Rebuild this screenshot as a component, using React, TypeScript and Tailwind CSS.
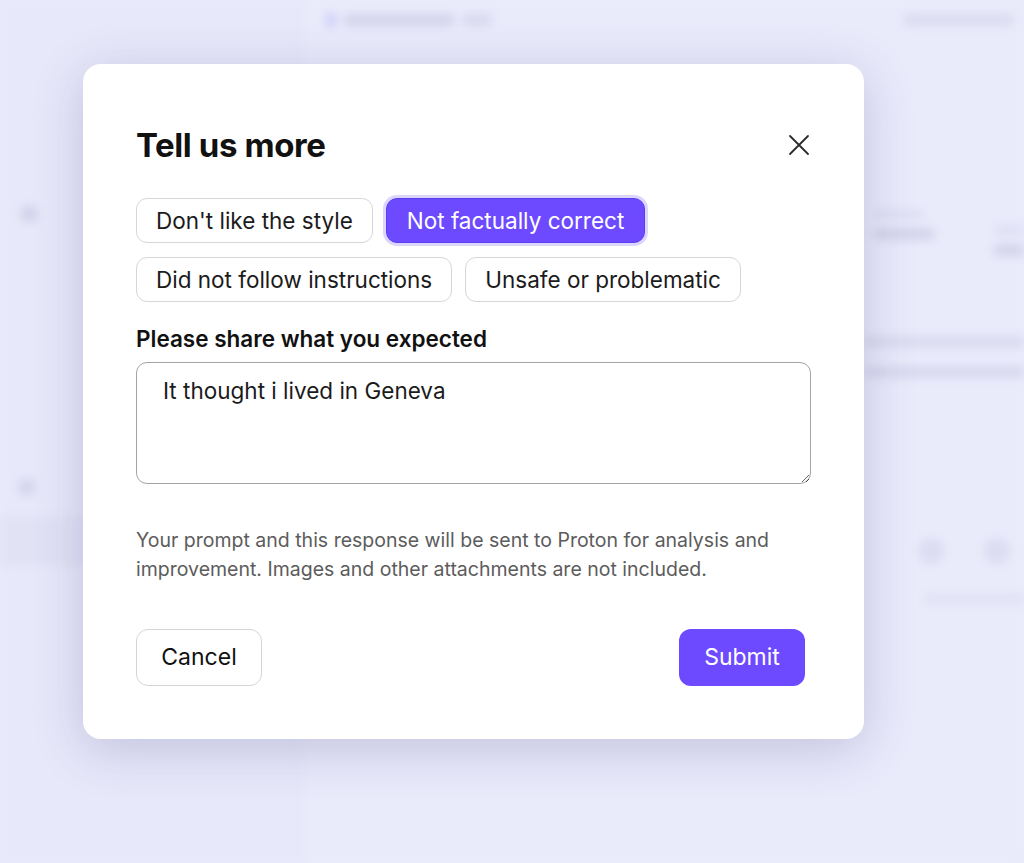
import { useState } from "react";

const reasons = [
  "Don't like the style",
  "Not factually correct",
  "Did not follow instructions",
  "Unsafe or problematic",
];

function Backdrop() {
  return (
    <div className="flex h-full w-full blur-[5px]">
      {/* sidebar */}
      <aside className="flex h-full w-[300px] shrink-0 flex-col border-r border-[#d9daf0] bg-[#e7e8f9]">
        <div className="h-[60px]" />
        <div className="mt-[145px] ml-[20px] h-[18px] w-[18px] rounded-full bg-[#d2d3ea]" />
        <div className="mt-[255px] ml-[18px] h-[18px] w-[18px] rounded-full bg-[#d4d5ec]" />
        <div className="mt-[20px] h-[50px] w-full bg-[#e1e2f4]" />
      </aside>
      {/* main */}
      <main className="flex flex-1 flex-col bg-[#e9eafa]">
        <header className="flex h-[40px] items-center justify-between pl-[26px] pr-[10px]">
          <div className="flex items-center gap-[8px]">
            <div className="h-[14px] w-[10px] rounded-sm bg-[#cfcdfc]" />
            <div className="h-[12px] w-[110px] rounded bg-[#d3d4ea]" />
            <div className="h-[12px] w-[30px] rounded bg-[#d9daee]" />
          </div>
          <div className="h-[12px] w-[110px] rounded bg-[#dcdcf0]" />
        </header>
        <div className="mt-[170px] flex justify-end gap-[60px]">
          <div className="flex flex-col gap-[10px]">
            <div className="h-[8px] w-[50px] rounded bg-[#dcddf1]" />
            <div className="h-[12px] w-[60px] rounded bg-[#d3d4ea]" />
          </div>
          <div className="flex flex-col gap-[10px] pt-[16px]">
            <div className="h-[8px] w-[30px] rounded bg-[#dcddf1]" />
            <div className="h-[12px] w-[30px] rounded bg-[#d3d4ea]" />
          </div>
        </div>
        <div className="mt-[80px] flex flex-col items-end gap-[18px]">
          <div className="h-[12px] w-[160px] rounded bg-[#dadbef]" />
          <div className="h-[12px] w-[160px] rounded bg-[#d8d9ee]" />
        </div>
        <div className="mt-[160px] flex justify-end gap-[40px] pr-[14px]">
          <div className="h-[26px] w-[26px] rounded-full bg-[#dcddf1]" />
          <div className="h-[26px] w-[26px] rounded-full bg-[#dcddf1]" />
        </div>
        <div className="mt-[30px] ml-auto h-[10px] w-[100px] rounded bg-[#e0e1f3]" />
      </main>
    </div>
  );
}

function CloseIcon() {
  return (
    <svg width="22" height="22" viewBox="0 0 22 22" fill="none">
      <path
        d="M2 2L20 20M20 2L2 20"
        stroke="#2b2b2b"
        strokeWidth="1.8"
        strokeLinecap="round"
      />
    </svg>
  );
}

export default function App() {
  const [selected, setSelected] = useState("Not factually correct");
  const [text, setText] = useState("It thought i lived in Geneva");

  return (
    <div className="relative h-[863px] w-full overflow-hidden bg-[#e9eafa] font-['Inter',sans-serif]">
      <Backdrop />

      {/* feedback modal */}
      <div className="absolute left-[83px] top-[64px] w-[781px] rounded-[18px] bg-white px-[53px] pb-[53px] pt-[63px] shadow-[0_10px_50px_rgba(70,70,140,0.24)]">
        <div className="flex items-center justify-between">
          <h2 className="text-[33px] font-bold leading-[36px] tracking-[-0.4px] text-[#111]">
            Tell us more
          </h2>
          <button className="flex h-[24px] w-[24px] items-center justify-center">
            <CloseIcon />
          </button>
        </div>

        <div className="mt-[35px] flex w-[620px] flex-wrap gap-x-[13px] gap-y-[14px]">
          {reasons.map((r) => {
            const active = r === selected;
            return (
              <button
                key={r}
                onClick={() => setSelected(r)}
                className={
                  active
                    ? "h-[45px] rounded-[11px] border border-[#5a3ff0] bg-[#6d4aff] px-[20px] text-[22.5px] text-white ring-[3px] ring-[#dcd6ff]"
                    : "h-[45px] rounded-[11px] border border-[#d7d7d7] bg-white px-[19px] text-[22.5px] text-[#1b1b1b]"
                }
              >
                {r}
              </button>
            );
          })}
        </div>

        <label className="mt-[23px] block text-[22.5px] font-semibold leading-[28px] text-[#111]">
          Please share what you expected
        </label>
        <textarea
          value={text}
          onChange={(e) => setText(e.target.value)}
          className="mt-[9px] block h-[122px] w-full rounded-[11px] border border-[#a3a3a3] px-[26px] pt-[14px] text-[22.5px] leading-[28px] text-[#1b1b1b] outline-none"
        />

        <p className="mt-[42px] text-[19.5px] leading-[29px] text-[#5c5c5c]">
          Your prompt and this response will be sent to Proton for analysis and
          improvement. Images and other attachments are not included.
        </p>

        <div className="mt-[45px] flex items-center justify-between">
          <button className="h-[57px] w-[126px] rounded-[12px] border border-[#d5d5d5] bg-white text-[23px] text-[#111]">
            Cancel
          </button>
          <button className="mr-[6px] h-[57px] w-[126px] rounded-[12px] bg-[#6d4aff] text-[23px] text-white">
            Submit
          </button>
        </div>
      </div>
    </div>
  );
}
